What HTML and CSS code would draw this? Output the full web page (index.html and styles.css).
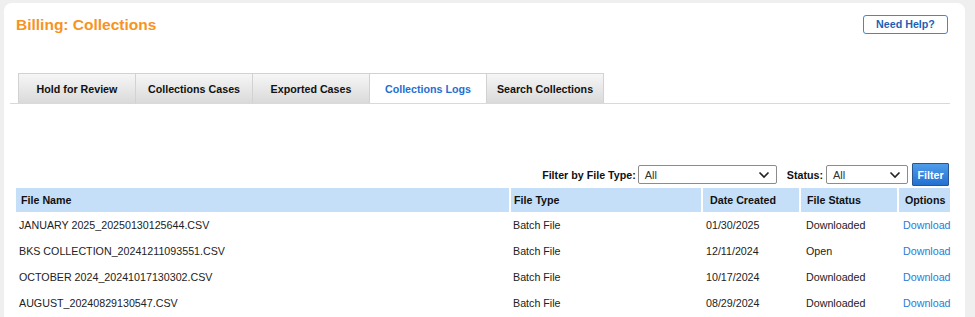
FILE: index.html
```html
<!DOCTYPE html>
<html lang="en">
<head>
  <meta charset="UTF-8">
  <meta name="viewport" content="width=device-width, initial-scale=1.0">
  <title>Billing: Collections</title>
  <link rel="stylesheet" href="styles.css">
</head>
<body>
  <div class="card">
    <div class="page-head">
      <h1 class="title">Billing: Collections</h1>
      <a class="help-btn" href="#">Need Help?</a>
    </div>

    <div class="tabs">
      <div class="tab">Hold for Review</div>
      <div class="tab">Collections Cases</div>
      <div class="tab">Exported Cases</div>
      <div class="tab active">Collections Logs</div>
      <div class="tab">Search Collections</div>
    </div>

    <div class="content">
      <div class="filters">
        <label class="lbl">Filter by File Type:</label>
        <div class="select select-type">
          <span>All</span>
          <svg width="12" height="8" viewBox="0 0 12 8"><path d="M1.5 1.5 L6 6 L10.5 1.5" fill="none" stroke="#222" stroke-width="1.6"/></svg>
        </div>
        <label class="lbl lbl-status">Status:</label>
        <div class="select select-status">
          <span>All</span>
          <svg width="12" height="8" viewBox="0 0 12 8"><path d="M1.5 1.5 L6 6 L10.5 1.5" fill="none" stroke="#222" stroke-width="1.6"/></svg>
        </div>
        <button class="filter-btn">Filter</button>
      </div>

      <table class="logs">
        <colgroup>
          <col class="c-name">
          <col class="c-type">
          <col class="c-date">
          <col class="c-status">
          <col class="c-opt">
        </colgroup>
        <thead>
          <tr>
            <th>File Name</th>
            <th>File Type</th>
            <th>Date Created</th>
            <th>File Status</th>
            <th>Options</th>
          </tr>
        </thead>
        <tbody>
          <tr>
            <td>JANUARY 2025_20250130125644.CSV</td>
            <td>Batch File</td>
            <td>01/30/2025</td>
            <td>Downloaded</td>
            <td><a href="#">Download</a></td>
          </tr>
          <tr>
            <td>BKS COLLECTION_20241211093551.CSV</td>
            <td>Batch File</td>
            <td>12/11/2024</td>
            <td>Open</td>
            <td><a href="#">Download</a></td>
          </tr>
          <tr>
            <td>OCTOBER 2024_20241017130302.CSV</td>
            <td>Batch File</td>
            <td>10/17/2024</td>
            <td>Downloaded</td>
            <td><a href="#">Download</a></td>
          </tr>
          <tr>
            <td>AUGUST_20240829130547.CSV</td>
            <td>Batch File</td>
            <td>08/29/2024</td>
            <td>Downloaded</td>
            <td><a href="#">Download</a></td>
          </tr>
        </tbody>
      </table>
    </div>
  </div>
</body>
</html>
```

FILE: styles.css
```css
body {
  margin: 0;
  padding: 3px 0 0 4px;
  background: #efefef;
  font-family: "Liberation Sans", Arial, sans-serif;
  font-size: 10.7px;
  color: #222;
}

.card {
  width: 946px;
  min-height: 330px;
  background: #fff;
  border-radius: 8px;
  padding: 13px 15px 0 0;
}

.page-head {
  display: flex;
  justify-content: space-between;
  align-items: flex-start;
  padding-left: 12px;
}

.title {
  margin: 0;
  font-size: 15.5px;
  line-height: 18px;
  font-weight: bold;
  color: #f7931e;
}

.help-btn {
  box-sizing: border-box;
  width: 85px;
  height: 19px;
  margin: -1px 2px 0 0;
  border: 1px solid #3f88d8;
  border-radius: 3px;
  color: #1d5fb6;
  font-weight: bold;
  text-decoration: none;
  text-align: center;
  line-height: 17px;
}

.tabs {
  display: flex;
  margin: 39px 0 0 6px;
  padding-left: 8px;
  border-bottom: 1px solid #d9d9d9;
}

.tab {
  box-sizing: border-box;
  width: 117px;
  height: 30px;
  border: 1px solid #d2d2d2;
  border-bottom: 0;
  border-left: 0;
  background: linear-gradient(#f6f6f6, #dadada);
  font-weight: bold;
  color: #111;
  text-align: center;
  line-height: 30px;
}

.tab:first-child {
  width: 118px;
  border-left: 1px solid #d2d2d2;
}

.tab.active {
  background: #fff;
  color: #1f6fd0;
}

.content {
  padding-left: 12px;
}

.filters {
  display: flex;
  justify-content: flex-end;
  align-items: center;
  margin-top: 59px;
  padding-right: 1px;
}

.lbl {
  font-weight: bold;
  color: #111;
  margin-right: 2px;
}

.lbl-status {
  margin-left: 10px;
  margin-right: 3px;
}

.select {
  box-sizing: border-box;
  height: 19px;
  display: flex;
  align-items: center;
  justify-content: space-between;
  padding: 0 6px 0 6px;
  border: 1px solid #8c8c8c;
  border-radius: 2px;
  color: #333;
  font-size: 11px;
}

.select-type {
  width: 139px;
}

.select-status {
  width: 82px;
}

.filter-btn {
  box-sizing: border-box;
  width: 37px;
  height: 23px;
  margin-left: 4px;
  padding: 0;
  border: 1px solid #2a5690;
  border-radius: 1px;
  background: linear-gradient(#4f9de9, #2370d2);
  color: #fff;
  font-family: inherit;
  font-size: 10.7px;
  font-weight: bold;
}

.logs {
  width: 938px;
  margin: 2px 0 0 -2px;
  border-collapse: separate;
  border-spacing: 2px 0;
  table-layout: fixed;
}

.c-name { width: 493px; }
.c-type { width: 190px; }
.c-date { width: 96px; }
.c-status { width: 96px; }
.c-opt { width: 51px; }

.logs th {
  height: 24px;
  padding: 0 0 0 5px;
  background: #c5dff8;
  color: #111;
  font-weight: bold;
  text-align: left;
}

.logs th:nth-child(2) { padding-left: 3px; }
.logs th:nth-child(3) { padding-left: 7px; }
.logs th:nth-child(4) { padding-left: 6px; }
.logs th:nth-child(5) { padding-left: 6px; }

.logs td {
  height: 26px;
  padding: 0 0 0 3px;
  white-space: nowrap;
}

.logs td:nth-child(2) { padding-left: 2px; }
.logs td:nth-child(3) { padding-left: 3px; }
.logs td:nth-child(4) { padding-left: 5px; }
.logs td:nth-child(5) { padding-left: 4px; }

.logs a {
  color: #2a7ad6;
  text-decoration: none;
}
```
